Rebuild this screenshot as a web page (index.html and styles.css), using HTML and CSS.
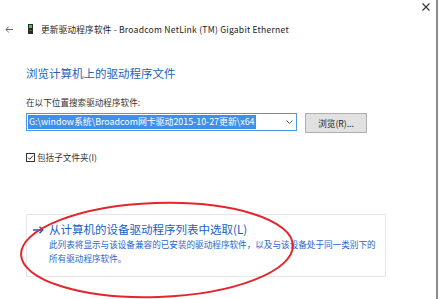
FILE: index.html
```html
<!DOCTYPE html>
<html lang="zh-CN">
<head>
<meta charset="utf-8">
<link rel="stylesheet" href="styles.css">
</head>
<body>
<div class="window">
  <div class="chrome">
    <svg class="close" width="8" height="8" viewBox="0 0 8 8"><path d="M0.5 0.5L7.5 7.5M7.5 0.5L0.5 7.5" stroke="#333" stroke-width="1.1" fill="none"/></svg>
  </div>
  <div class="header">
    <svg class="back" width="8" height="7" viewBox="0 0 8 7"><path d="M8 3.5H1M3.8 0.6L0.9 3.5L3.8 6.4" stroke="#666" stroke-width="1" fill="none"/></svg>
    <svg class="devicon" width="5" height="10" viewBox="0 0 5 10"><rect x="0" y="0" width="5" height="10" fill="#2b2b2b"/><rect x="1" y="1" width="3" height="3" fill="#3bd13b"/><rect x="1" y="6" width="3" height="1" fill="#555"/></svg>
    <span class="title">更新驱动程序软件 - Broadcom NetLink (TM) Gigabit Ethernet</span>
  </div>
  <div class="content">
    <h1 class="heading">浏览计算机上的驱动程序文件</h1>
    <div class="label">在以下位置搜索驱动程序软件:</div>
    <div class="inputrow">
      <div class="combo">
        <span class="sel">G:\window系统\Broadcom网卡驱动2015-10-27更新\x64</span>
        <svg class="chev" width="7" height="4" viewBox="0 0 7 4"><path d="M0.5 0.5L3.5 3.5L6.5 0.5" stroke="#555" stroke-width="1" fill="none"/></svg>
      </div>
      <div class="btn">浏览(R)...</div>
    </div>
    <div class="check">
      <svg class="box" width="9" height="9" viewBox="0 0 9 9"><rect x="0.5" y="0.5" width="8" height="8" fill="#fff" stroke="#333" stroke-width="1"/><path d="M2 4.6L3.7 6.3L7 2.6" stroke="#333" stroke-width="1" fill="none"/></svg>
      <span>包括子文件夹(I)</span>
    </div>
    <div class="card">
      <div class="linkrow">
        <svg class="arrow" width="11" height="8" viewBox="0 0 11 8"><path d="M0 4H10M6.5 0.7L9.8 4L6.5 7.3" stroke="#1b5fc6" stroke-width="1.4" fill="none"/></svg>
        <div class="linktext">
          <div class="link">从计算机的设备驱动程序列表中选取(L)</div>
          <div class="desc">此列表将显示与该设备兼容的已安装的驱动程序软件，以及与该设备处于同一类别下的所有驱动程序软件。</div>
        </div>
      </div>
    </div>
  </div>
  <svg class="circle" width="439" height="299" viewBox="0 0 439 299"><ellipse cx="157" cy="250" rx="136" ry="47" transform="rotate(-2 157 250)" fill="none" stroke="#e3262b" stroke-width="2"/></svg>
</div>
</body>
</html>
```
FILE: styles.css
```css
html, body {
  margin: 0;
  padding: 0;
  background: #fff;
}
body {
  width: 439px;
  height: 299px;
  overflow: hidden;
  font-family: "Noto Sans CJK SC", "Liberation Sans", sans-serif;
  color: #333;
}
.window {
  position: relative;
  width: 436px;
  height: 299px;
  border-right: 2px solid #8c8c8c;
}
.chrome {
  height: 21px;
  display: flex;
  justify-content: flex-end;
  align-items: flex-start;
  padding-right: 6px;
}
.close {
  margin-top: 3px;
  display: block;
}
.header {
  height: 16px;
  display: flex;
  align-items: center;
  padding-left: 5px;
}
.back { display: block; }
.devicon { display: block; margin-left: 15px; }
.title {
  margin-left: 8px;
  font-size: 8.6px;
  letter-spacing: 0.22px;
  line-height: 16px;
  color: #222;
  white-space: nowrap;
}
.content {
  padding-left: 26px;
}
.heading {
  margin: 28px 0 0;
  font-size: 11.5px;
  font-weight: normal;
  line-height: 16px;
  color: #2a5fb5;
  white-space: nowrap;
}
.label {
  margin-top: 14px;
  font-size: 8.6px;
  line-height: 14px;
  white-space: nowrap;
}
.inputrow {
  margin-top: 4px;
  display: flex;
  align-items: flex-start;
}
.combo {
  width: 271px;
  height: 18px;
  box-sizing: border-box;
  border: 1px solid #4a97e6;
  display: flex;
  align-items: center;
  padding-left: 1px;
  position: relative;
}
.sel {
  background: #3d8ff0;
  color: #fff;
  font-size: 8.9px;
  line-height: 14px;
  height: 14px;
  padding: 0 1px;
  white-space: nowrap;
}
.chev {
  display: block;
  margin-left: auto;
  margin-right: 3px;
}
.btn {
  margin-left: 8px;
  width: 62px;
  height: 20px;
  box-sizing: border-box;
  background: #e1e1e1;
  border: 1px solid #b0b0b0;
  font-size: 8.6px;
  line-height: 18px;
  text-align: center;
  color: #222;
}
.check {
  margin-top: 17px;
  height: 14px;
  display: flex;
  align-items: center;
  font-size: 8.6px;
  white-space: nowrap;
}
.box { display: block; margin-right: 2px; }
.card {
  margin-top: 50px;
  width: 360px;
  height: 63px;
  box-sizing: border-box;
  border: 1px solid #e6e6e6;
  padding: 7px 0 0 6px;
}
.linkrow {
  display: flex;
  align-items: flex-start;
}
.arrow {
  display: block;
  margin-top: 4px;
  flex: none;
}
.linktext {
  margin-left: 5px;
  width: 330px;
}
.link {
  font-size: 11.5px;
  line-height: 15px;
  color: #1b5fc6;
  white-space: nowrap;
}
.desc {
  font-size: 8.6px;
  line-height: 14px;
  color: #2a66cc;
}
.circle {
  position: absolute;
  left: 0;
  top: 0;
  pointer-events: none;
}
```
